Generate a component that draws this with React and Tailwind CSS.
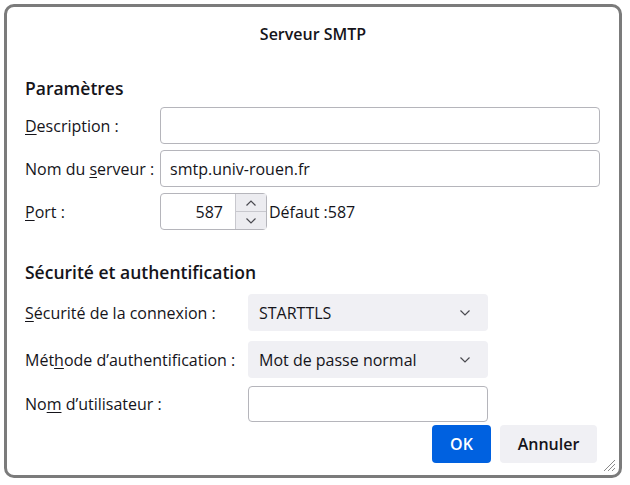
import React from 'react';

const font = { fontFamily: '"Open Sans", "Noto Sans", sans-serif' };

const Chevron = ({ up }) => (
  <svg width="12" height="8" viewBox="0 0 12 8" className="block">
    <path
      d={up ? 'M1.5 6.5 L6 2 L10.5 6.5' : 'M1.5 1.5 L6 6 L10.5 1.5'}
      fill="none"
      stroke="#4a4a50"
      strokeWidth="1.2"
    />
  </svg>
);

const Select = ({ value }) => (
  <div className="flex h-[37px] w-[240px] items-center justify-between rounded-[4px] bg-[#f0f0f4] pl-[11px] pr-[17px] text-[16px] text-[#15141a]">
    <span>{value}</span>
    <Chevron />
  </div>
);

const Label = ({ children, w }) => (
  <div className={`${w} shrink-0 text-[16px] text-[#15141a]`}>{children}</div>
);

const App = () => {
  return (
    <div className="h-[485px] w-[630px] bg-white p-[4px]" style={font}>
      {/* dialog frame */}
      <div className="relative flex h-[474px] w-[618px] flex-col rounded-[10px] border-[3px] border-[#7b7b7b] bg-white">
        <div className="pt-[16px] text-center text-[16px] font-semibold leading-[22px] text-[#15141a]">
          Serveur SMTP
        </div>

        <div className="pl-[18px] pr-[19px]">
          {/* Paramètres */}
          <div className="mt-[32px] text-[17.5px] font-semibold leading-[22px] text-[#15141a]">Paramètres</div>

          <div className="mt-[8px] flex flex-col gap-[6px]">
            <div className="flex items-center">
              <Label w="w-[135px]">
                <u className="underline-offset-2">D</u>escription :
              </Label>
              <div className="h-[37px] flex-1 rounded-[4px] border border-[#b5b5bb] bg-white" />
            </div>

            <div className="flex items-center">
              <Label w="w-[135px]">
                Nom du <u className="underline-offset-2">s</u>erveur :
              </Label>
              <div className="flex h-[37px] flex-1 items-center rounded-[4px] border border-[#b5b5bb] bg-white px-[9px] text-[16px] text-[#15141a]">
                smtp.univ-rouen.fr
              </div>
            </div>

            <div className="flex items-center">
              <Label w="w-[135px]">
                <u className="underline-offset-2">P</u>ort :
              </Label>
              <div className="flex h-[37px] w-[107px] rounded-[4px] border border-[#b5b5bb] bg-white">
                <div className="flex flex-1 items-center justify-end pr-[12px] text-[16px] text-[#15141a]">587</div>
                <div className="flex w-[31px] flex-col border-l border-[#c8c8ce] bg-[#ececf0]">
                  <div className="flex flex-1 items-center justify-center border-b border-[#c8c8ce]">
                    <Chevron up />
                  </div>
                  <div className="flex flex-1 items-center justify-center">
                    <Chevron />
                  </div>
                </div>
              </div>
              <span className="ml-[2px] text-[16px] text-[#15141a]">Défaut :587</span>
            </div>
          </div>

          {/* Sécurité */}
          <div className="mt-[31px] text-[17.5px] font-semibold leading-[22px] text-[#15141a]">
            Sécurité et authentification
          </div>

          <div className="mt-[11px] flex flex-col">
            <div className="flex items-center">
              <Label w="w-[223px]">
                <u className="underline-offset-2">S</u>écurité de la connexion :
              </Label>
              <Select value="STARTTLS" />
            </div>

            <div className="mt-[10px] flex items-center">
              <Label w="w-[223px]">
                Mét<u className="underline-offset-2">h</u>ode d’authentification :
              </Label>
              <Select value="Mot de passe normal" />
            </div>

            <div className="mt-[8px] flex items-center">
              <Label w="w-[223px]">
                No<u className="underline-offset-2">m</u> d’utilisateur :
              </Label>
              <div className="h-[36px] w-[240px] rounded-[4px] border border-[#b5b5bb] bg-white" />
            </div>
          </div>

          <div className="mt-[3px] flex justify-end gap-[9px] pr-[3px]">
            <button className="h-[38px] w-[59px] rounded-[4px] bg-[#0061e0] text-[16px] font-semibold text-white">
              OK
            </button>
            <button className="h-[38px] w-[97px] rounded-[4px] bg-[#f0f0f4] text-[16px] font-semibold text-[#15141a]">
              Annuler
            </button>
          </div>
        </div>

        {/* resize grip */}
        <svg width="14" height="14" viewBox="0 0 14 14" className="absolute bottom-[3px] right-[3px]">
          <path d="M13 2 L2 13 M13 6 L6 13 M13 10 L10 13" stroke="#8a8a8a" strokeWidth="1" />
        </svg>
      </div>
    </div>
  );
};

export default App;
